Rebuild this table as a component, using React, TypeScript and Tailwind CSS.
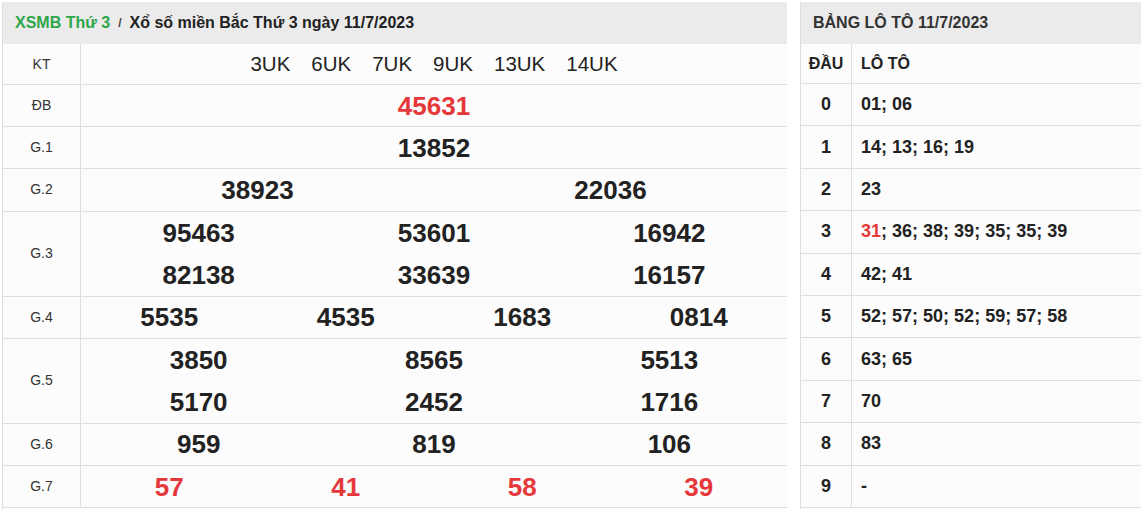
const font = { fontFamily: '"Liberation Sans", Arial, sans-serif' };

type Prize = { label: string; lines: string[][]; red?: boolean };

const prizes: Prize[] = [
  { label: "ĐB", lines: [["45631"]], red: true },
  { label: "G.1", lines: [["13852"]] },
  { label: "G.2", lines: [["38923", "22036"]] },
  { label: "G.3", lines: [["95463", "53601", "16942"], ["82138", "33639", "16157"]] },
  { label: "G.4", lines: [["5535", "4535", "1683", "0814"]] },
  { label: "G.5", lines: [["3850", "8565", "5513"], ["5170", "2452", "1716"]] },
  { label: "G.6", lines: [["959", "819", "106"]] },
  { label: "G.7", lines: [["57", "41", "58", "39"]], red: true },
];

const lotos: [string, string[]][] = [
  ["0", ["01", "06"]],
  ["1", ["14", "13", "16", "19"]],
  ["2", ["23"]],
  ["3", ["31", "36", "38", "39", "35", "35", "39"]],
  ["4", ["42", "41"]],
  ["5", ["52", "57", "50", "52", "59", "57", "58"]],
  ["6", ["63", "65"]],
  ["7", ["70"]],
  ["8", ["83"]],
  ["9", []],
];

const cols: Record<number, string> = {
  1: "grid-cols-1",
  2: "grid-cols-2",
  3: "grid-cols-3",
  4: "grid-cols-4",
};

function PrizeRow({ prize }: { prize: Prize }) {
  const double = prize.lines.length > 1;
  return (
    <div className="flex border-b border-[#dedede]">
      <div className="w-[78px] shrink-0 border-r border-[#dedede] flex items-center justify-center text-[14px] text-[#333]">
        {prize.label}
      </div>
      <div className="flex-1 flex flex-col">
        {prize.lines.map((line, i) => (
          <div
            key={i}
            className={`grid ${cols[line.length]} ${double ? "h-[42px]" : "h-[41.2px]"} items-center`}
          >
            {line.map((n, j) => (
              <div
                key={j}
                className={`text-center font-bold text-[26px] leading-none ${
                  prize.red ? "text-[#e5383b]" : "text-[#222]"
                }`}
              >
                {n}
              </div>
            ))}
          </div>
        ))}
      </div>
    </div>
  );
}

export default function App() {
  return (
    <div className="flex gap-[13px] pt-[2px] pl-[2px] bg-white w-[1141px] h-[509px] overflow-hidden" style={font}>
      {/* Result table */}
      <div className="w-[785px] shrink-0 border-l border-[#dedede] bg-[#fcfcfc]">
        <div className="h-[42px] bg-[#ebebeb] flex items-center pl-[12px] text-[16px] font-bold">
          <span className="text-[#2ea64a]">XSMB Thứ 3</span>
          <span className="mx-[8px] text-[12px] text-[#444]">/</span>
          <span className="text-[#222]">Xổ số miền Bắc Thứ 3 ngày 11/7/2023</span>
        </div>
        <div className="flex border-b border-[#dedede] h-[41px]">
          <div className="w-[78px] shrink-0 border-r border-[#dedede] flex items-center justify-center text-[14px] text-[#333]">
            KT
          </div>
          <div className="flex-1 flex items-center justify-center gap-[21px] text-[20.5px] text-[#222]">
            {["3UK", "6UK", "7UK", "9UK", "13UK", "14UK"].map((k) => (
              <span key={k}>{k}</span>
            ))}
          </div>
        </div>
        {prizes.map((p) => (
          <PrizeRow key={p.label} prize={p} />
        ))}
      </div>

      {/* Loto table */}
      <div className="flex-1 border-l border-[#dedede] bg-[#fcfcfc]">
        <div className="h-[42px] bg-[#ebebeb] flex items-center pl-[12px] text-[16px] font-bold text-[#333]">
          BẢNG LÔ TÔ 11/7/2023
        </div>
        <div className="flex h-[40px] border-b border-[#dedede] text-[16px] font-bold text-[#222]">
          <div className="w-[51px] border-r border-[#dedede] flex items-center justify-center">ĐẦU</div>
          <div className="flex items-center pl-[9px]">LÔ TÔ</div>
        </div>
        {lotos.map(([head, nums]) => (
          <div key={head} className="flex h-[42.4px] border-b border-[#dedede] text-[18px] font-bold text-[#222]">
            <div className="w-[51px] border-r border-[#dedede] flex items-center justify-center">{head}</div>
            <div className="flex items-center pl-[9px]">
              <span>
                {nums.length === 0
                  ? "-"
                  : nums.map((n, i) => (
                      <span key={i}>
                        <span className={n === "31" ? "text-[#e5383b]" : ""}>{n}</span>
                        {i < nums.length - 1 ? "; " : ""}
                      </span>
                    ))}
              </span>
            </div>
          </div>
        ))}
      </div>
    </div>
  );
}
